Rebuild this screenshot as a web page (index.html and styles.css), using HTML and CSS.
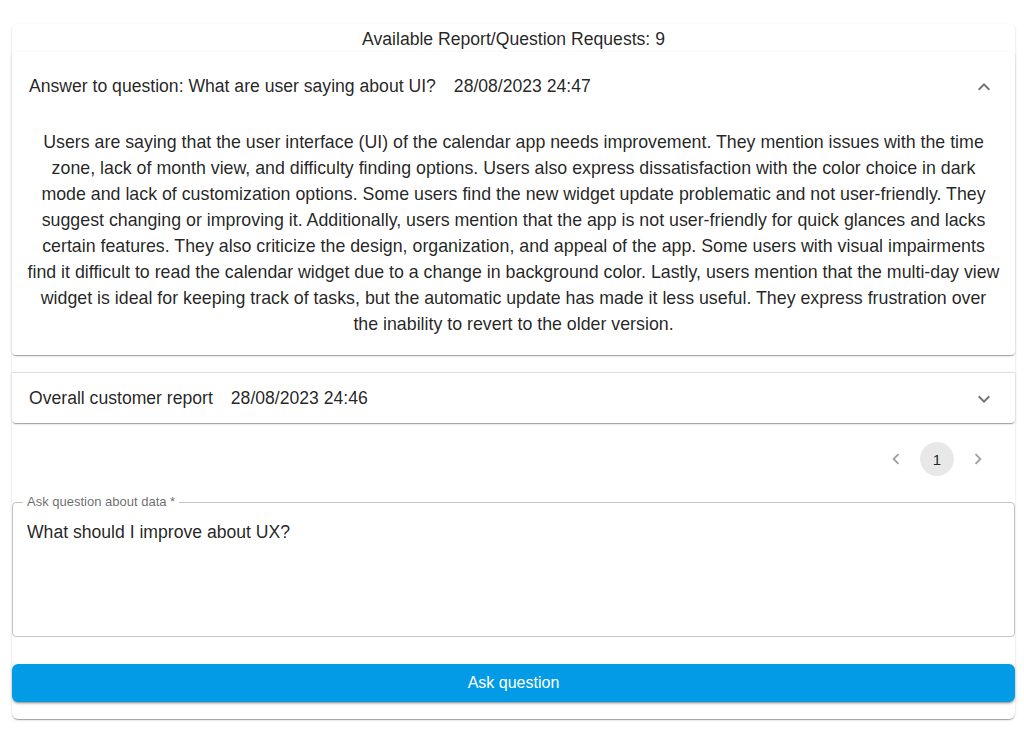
FILE: index.html
```html
<!DOCTYPE html>
<html lang="en">
<head>
    <meta charset="UTF-8">
    <meta name="viewport" content="width=device-width, initial-scale=1.0">
    <title>Customer Reports</title>
    <link rel="stylesheet" href="styles.css">
</head>
<body>
    <div class="page">
        <div class="card">
            <div class="requests">Available Report/Question Requests: 9</div>

            <div class="accordion expanded">
                <div class="summary">
                    <span class="summary-title">Answer to question: What are user saying about UI?</span>
                    <span class="summary-date">28/08/2023 24:47</span>
                    <svg class="chevron" viewBox="0 0 24 24"><path d="m12 8-6 6 1.41 1.41L12 10.83l4.59 4.58L18 14z"/></svg>
                </div>
                <div class="details">
                    Users are saying that the user interface (UI) of the calendar app needs improvement. They mention issues with the time<br>
                    zone, lack of month view, and difficulty finding options. Users also express dissatisfaction with the color choice in dark<br>
                    mode and lack of customization options. Some users find the new widget update problematic and not user-friendly. They<br>
                    suggest changing or improving it. Additionally, users mention that the app is not user-friendly for quick glances and lacks<br>
                    certain features. They also criticize the design, organization, and appeal of the app. Some users with visual impairments<br>
                    find it difficult to read the calendar widget due to a change in background color. Lastly, users mention that the multi-day view<br>
                    widget is ideal for keeping track of tasks, but the automatic update has made it less useful. They express frustration over<br>
                    the inability to revert to the older version.
                </div>
            </div>

            <div class="accordion collapsed">
                <div class="summary short">
                    <span class="summary-title">Overall customer report</span>
                    <span class="summary-date">28/08/2023 24:46</span>
                    <svg class="chevron" viewBox="0 0 24 24"><path d="M16.59 8.59 12 13.17 7.41 8.59 6 10l6 6 6-6z"/></svg>
                </div>
            </div>

            <div class="pagination">
                <span class="page-arrow">
                    <svg viewBox="0 0 24 24"><path d="M15.41 7.41 14 6l-6 6 6 6 1.41-1.41L10.83 12z"/></svg>
                </span>
                <span class="page-item selected">1</span>
                <span class="page-arrow">
                    <svg viewBox="0 0 24 24"><path d="M10 6 8.59 7.41 13.17 12l-4.58 4.59L10 18l6-6z"/></svg>
                </span>
            </div>

            <fieldset class="question-field">
                <legend>Ask question about data *</legend>
                <textarea class="question-input" rows="4">What should I improve about UX?</textarea>
            </fieldset>

            <button class="ask-button">Ask question</button>
        </div>
    </div>
</body>
</html>
```

FILE: styles.css
```css
body {
    margin: 0;
    font-family: "Liberation Sans", Arial, sans-serif;
    color: rgba(0, 0, 0, 0.87);
    background: #fff;
}
.page {
    padding: 24px 9px 30px 12px;
}
.card {
    background: #fff;
    border-radius: 6px;
    box-shadow: 0px 2px 1px -1px rgba(0, 0, 0, 0.2), 0px 1px 1px 0px rgba(0, 0, 0, 0.14), 0px 1px 3px 0px rgba(0, 0, 0, 0.12);
    padding: 3px 0 17px;
}
.requests {
    text-align: center;
    font-size: 17.6px;
    line-height: 24px;
    height: 25px;
}
.accordion {
    background: #fff;
    border-radius: 4px;
    box-shadow: 0px 2px 1px -1px rgba(0, 0, 0, 0.2), 0px 1px 1px 0px rgba(0, 0, 0, 0.14), 0px 1px 3px 0px rgba(0, 0, 0, 0.12);
}
.accordion.collapsed {
    margin-top: 17px;
    border-top: 1px solid rgba(0, 0, 0, 0.12);
    border-radius: 0 0 4px 4px;
}
.summary {
    display: flex;
    align-items: center;
    height: 68px;
    padding: 1px 19px 0 17px;
    box-sizing: border-box;
    font-size: 17.6px;
}
.summary.short {
    height: 50px;
}
.summary-date {
    margin-left: 18px;
}
.chevron {
    width: 24px;
    height: 24px;
    margin-left: auto;
    fill: rgba(0, 0, 0, 0.54);
}
.details {
    padding: 9px 12px 18px;
    text-align: center;
    font-size: 17.8px;
    line-height: 26px;
    white-space: nowrap;
}
.pagination {
    display: flex;
    justify-content: flex-end;
    align-items: center;
    gap: 7px;
    margin-top: 19px;
    padding-right: 20px;
}
.page-item, .page-arrow {
    width: 34px;
    height: 34px;
    border-radius: 50%;
    display: flex;
    align-items: center;
    justify-content: center;
    font-size: 15px;
}
.page-item.selected {
    background: rgba(0, 0, 0, 0.09);
}
.page-arrow svg {
    width: 22px;
    height: 22px;
    fill: rgba(0, 0, 0, 0.38);
}
.question-field {
    margin: 20px 0 0;
    padding: 0 10px;
    border: 1px solid #c4c4c4;
    border-radius: 4px;
    height: 139px;
}
.question-field legend {
    font-size: 13px;
    color: rgba(0, 0, 0, 0.6);
    padding: 0 4px;
    line-height: 12px;
}
.question-input {
    display: block;
    width: 100%;
    box-sizing: border-box;
    border: none;
    outline: none;
    resize: none;
    padding: 13px 4px 0;
    font-family: "Liberation Sans", Arial, sans-serif;
    font-size: 17.6px;
    line-height: 23px;
    color: rgba(0, 0, 0, 0.87);
    background: transparent;
}
.ask-button {
    display: block;
    width: 100%;
    height: 38px;
    margin-top: 27px;
    border: none;
    border-radius: 6px;
    background: #039be5;
    color: #fff;
    font-family: "Liberation Sans", Arial, sans-serif;
    font-size: 16px;
    cursor: pointer;
    box-shadow: 0px 3px 1px -2px rgba(0, 0, 0, 0.2), 0px 2px 2px 0px rgba(0, 0, 0, 0.14), 0px 1px 5px 0px rgba(0, 0, 0, 0.12);
}
```
